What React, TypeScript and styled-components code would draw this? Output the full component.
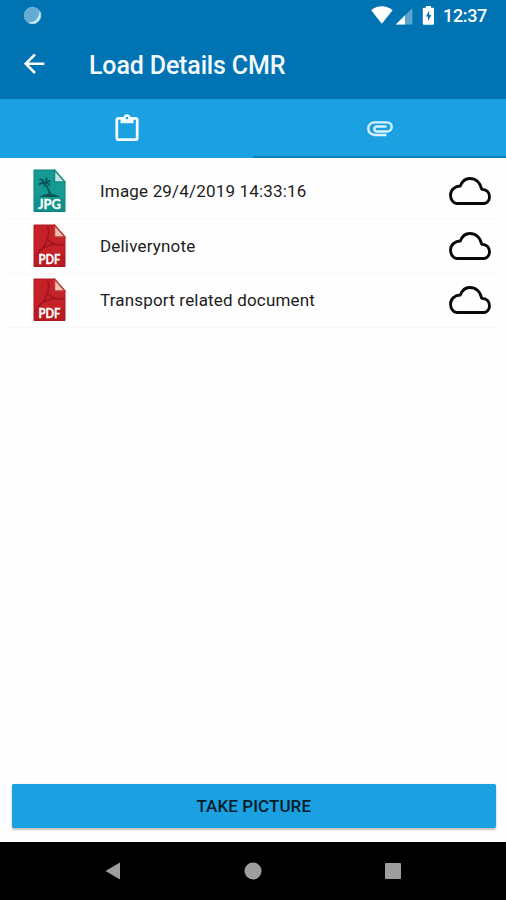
import React from "react";
import styled, { createGlobalStyle } from "styled-components";

const GlobalStyle = createGlobalStyle`
  * { box-sizing: border-box; }
  body { margin: 0; background: #fff; font-family: Roboto, "Liberation Sans", sans-serif; }
  svg { display: block; flex: none; }
`;

const Screen = styled.div`
  width: 506px;
  height: 900px;
  display: flex;
  flex-direction: column;
  overflow: hidden;
  background: #fefefe;
`;

const StatusBar = styled.header`
  height: 31px;
  flex: none;
  display: flex;
  align-items: center;
  padding: 0 19px 0 23px;
  background: #0074b3;
  color: #fff;
`;

const StatusIcons = styled.div`
  margin-left: auto;
  display: flex;
  align-items: center;
`;

const Clock = styled.span`
  margin-left: 8px;
  width: 44px;
  font-size: 18px;
  line-height: 32px;
  font-weight: 500;
  letter-spacing: -0.35px;
  white-space: nowrap;
`;

const Toolbar = styled.div`
  height: 68px;
  flex: none;
  display: flex;
  align-items: center;
  padding-left: 23px;
  background: #0074b3;

  > svg { margin-bottom: 2px; }
`;

const Title = styled.h1`
  margin: 0 0 0 43px;
  font-size: 25px;
  line-height: 68px;
  padding-top: 1px;
  font-weight: 500;
  letter-spacing: -0.15px;
  color: #f4f9fd;
  white-space: nowrap;
`;

const Tabs = styled.nav`
  height: 58.5px;
  flex: none;
  display: grid;
  grid-template-columns: 1fr 1fr;
  background: #1ba1e2;
`;

const Tab = styled.button<{ $active?: boolean }>`
  display: flex;
  align-items: center;
  justify-content: center;
  padding: ${(p) => (p.$active ? "3px" : "1px")} 0 0;
  border: 0;
  border-bottom: 2px solid ${(p) => (p.$active ? "#0b7fc1" : "#1ba1e2")};
  background: none;
`;

const FileList = styled.ul`
  flex: 1;
  margin: 0;
  padding: 7px 8px 0;
  list-style: none;
`;

const FileRow = styled.li`
  height: 54.5px;
  display: flex;
  align-items: center;
  padding: 0 7px 0 25px;
  border-bottom: 1px solid #f8f8f8;
`;

const FileName = styled.span`
  flex: 1;
  margin-left: 34px;
  font-size: 17px;
  line-height: 24px;
  letter-spacing: 0.18px;
  color: #1c1c1c;
`;

const TakePicture = styled.button`
  height: 44px;
  flex: none;
  margin: 0 10.5px 14px 12px;
  padding: 0;
  border: 0;
  border-radius: 2px;
  background: #1ba1e2;
  box-shadow: 0 2px 2px rgba(70, 40, 30, 0.28), 0 0 1px rgba(0, 80, 130, 0.4);
  font: 500 17px/45px Roboto, sans-serif;
  letter-spacing: 0.08px;
  color: #061c28;
`;

const NavBar = styled.footer`
  height: 58px;
  flex: none;
  display: grid;
  grid-template-columns: 140px 140px 140px;
  justify-content: center;
  justify-items: center;
  align-items: center;
  background: #000;
`;

const SyncDot = () => (
  <svg width="19" height="19" viewBox="0 0 19 19">
    <circle cx="9.5" cy="9.5" r="8.5" fill="#65acd2" />
    <path d="M17 6a8.3 8.3 0 0 1-11 10.8c6 .2 10-3.8 11-10.8z" fill="#d5f1fa" stroke="#d5f1fa" strokeWidth=".8" />
    <circle cx="9.5" cy="9.5" r="8.2" fill="none" stroke="#83bedc" strokeWidth="1" strokeDasharray="2 1.5" />
  </svg>
);

const StatusGlyphs = () => (
  <svg width="64" height="22" viewBox="371 5 64 22">
    <path d="M371.2 10.2c5.8-5.3 15.3-5.3 21.4 0L381.8 23.8z" fill="#fff" />
    <path d="M412.4 8v16.5H395.8z" fill="#5aa6d0" />
    <path d="M405 15.3v9.2h-9.2z" fill="#fff" />
    <path d="M426 6h5v1.8h2q1 0 1 1v15q0 1-1 1h-9.200q-1 0-1-1v-15q0-1 1-1h2.200z" fill="#fff" />
    <path d="M429.200 10.500l-3.300 6h2.100v4.700l3.300-6.200h-2.100z" fill="#0074b3" />
  </svg>
);

const BackArrow = () => (
  <svg width="23" height="22" viewBox="0 0 23 22" fill="none" stroke="#fff" strokeWidth="2.5">
    <path d="M12 1.500L2.700 10.700 12 20M2.700 10.700H21.300" />
  </svg>
);

const Clipboard = () => (
  <svg width="24" height="30" viewBox="0 0 24 30">
    <path d="M3.500 5.300h17q1.700 0 1.700 1.700v18q0 1.700-1.700 1.700h-17q-1.700 0-1.700-1.700V7q0-1.700 1.700-1.700z" fill="none" stroke="#f1faff" strokeWidth="2.800" />
    <path d="M5.500 4H8.500a3.600 3.600 0 0 1 7 0h3v6.200h-13z" fill="#f1faff" />
    <circle cx="12" cy="5" r="1.200" fill="#1ba1e2" />
  </svg>
);

const Paperclip = () => (
  <svg width="26" height="16" viewBox="0 0 26 16" fill="none" stroke="#d8f1fc" strokeWidth="2.400">
    <path d="M19.500 14H8C4 14 1.300 11.300 1.300 7.700S4 1.400 8 1.400H19.800c3 0 4.900 1.900 4.900 4.500s-1.900 4.600-4.900 4.600H10.200c-1.800 0-2.800-1-2.800-2.500s1-2.500 2.800-2.500h9.300" />
  </svg>
);

const Cloud = () => (
  <svg width="42" height="28" viewBox="57 52 126 84">
    <path
      d="M80 131.500H163C171 131.500 178.500 122 178.500 111C178.500 98 169 88.500 155 89C151 68 137 56.500 119 56.500C107 56.500 96 66 91 79C75 79 61.500 91 61.500 106C61.500 119 70 131.500 80 131.500Z"
      fill="none"
      stroke="#080808"
      strokeWidth="8.500"
      strokeLinejoin="round"
    />
  </svg>
);

const FileIcon = ({ kind }: { kind: "JPG" | "PDF" }) => {
  const jpg = kind === "JPG";
  return (
    <svg width="33" height="44" viewBox="0 0 33 44">
      <path d="M1 1h20.500L32 13v29.500H1z" fill={jpg ? "#159b93" : "#c62028"} stroke={jpg ? "#087f7a" : "#a91a20"} />
      {jpg ? (
        <g fill="#07565a">
          <path d="M6 28c4-2.600 7-3.300 11-3.200 4 0 7 1.300 10 3.200z" />
          <path d="M12 14c2.500 2.500 4.500 6 6.500 11.500h-2.800c-1-5-2.500-8.500-5-11z" />
          <path d="M12 13.300C10 9 7.500 8.600 5.600 11c2 .1 3.400.7 4.200 2-3-.4-4.400 1.200-4.200 4 1.500-1.700 3.300-2.400 5-2l.3 4c1.500-1.500 2-2.700 1.800-4.200 2 .2 3.300 1.200 4.300 3 .5-2.600-.4-4-2.800-4.500 1-.8 2.400-.8 4 .1-.8-3-3.800-3.400-6.200-.1z" />
          <path d="M12 13l1-5 1.800 2.300z" />
        </g>
      ) : (
        <g fill="none" stroke="#9c151c" strokeWidth="1.500" strokeLinejoin="round">
          <path d="M14.500 2.500c1.600 4 1.300 9-.5 13.500-2 5-5.500 10-9.500 13.500M14.500 15.500c3.500 3.500 9.500 6 16.500 5.500M6 26.500c6-4 11-6 18-6.500" />
        </g>
      )}
      <path d="M1.500 30h30v12h-30z" fill={jpg ? "#0b8984" : "#ad171e"} opacity=".55" />
      <path d="M21.500 1L32 13H21.500z" fill={jpg ? "#c6e5e0" : "#f2c3b5"} stroke={jpg ? "#168b85" : "#bd3a35"} strokeWidth="1.5" />
      <text
        x="16.500"
        y="39.500"
        textAnchor="middle"
        textLength={jpg ? 23 : 22}
        lengthAdjust="spacingAndGlyphs"
        fontFamily="Lato, sans-serif"
        fontWeight="700"
        fontSize="12.500"
        fill="#fff"
        stroke="#fff"
        strokeWidth=".3"
      >
        {kind}
      </text>
    </svg>
  );
};

const files: { kind: "JPG" | "PDF"; name: string }[] = [
  { kind: "JPG", name: "Image 29/4/2019 14:33:16" },
  { kind: "PDF", name: "Deliverynote" },
  { kind: "PDF", name: "Transport related document" },
];

export default function App() {
  return (
    <Screen>
      <GlobalStyle />
      <StatusBar>
        <SyncDot />
        <StatusIcons>
          <StatusGlyphs />
          <Clock>12:37</Clock>
        </StatusIcons>
      </StatusBar>
      <Toolbar>
        <BackArrow />
        <Title>Load Details CMR</Title>
      </Toolbar>
      <Tabs>
        <Tab aria-label="Details"><Clipboard /></Tab>
        <Tab $active aria-label="Attachments"><Paperclip /></Tab>
      </Tabs>
      <FileList>
        {files.map((file) => (
          <FileRow key={file.name}>
            <FileIcon kind={file.kind} />
            <FileName>{file.name}</FileName>
            <Cloud />
          </FileRow>
        ))}
      </FileList>
      <TakePicture>TAKE PICTURE</TakePicture>
      <NavBar>
        <svg width="16" height="18" viewBox="0 0 16 18"><path d="M.5 9L15 .5v17z" fill="#9e9e9e" /></svg>
        <svg width="18" height="18" viewBox="0 0 18 18"><circle cx="9" cy="9" r="8.500" fill="#9e9e9e" /></svg>
        <svg width="16" height="16" viewBox="0 0 16 16"><rect width="16" height="16" rx="1" fill="#9e9e9e" /></svg>
      </NavBar>
    </Screen>
  );
}
